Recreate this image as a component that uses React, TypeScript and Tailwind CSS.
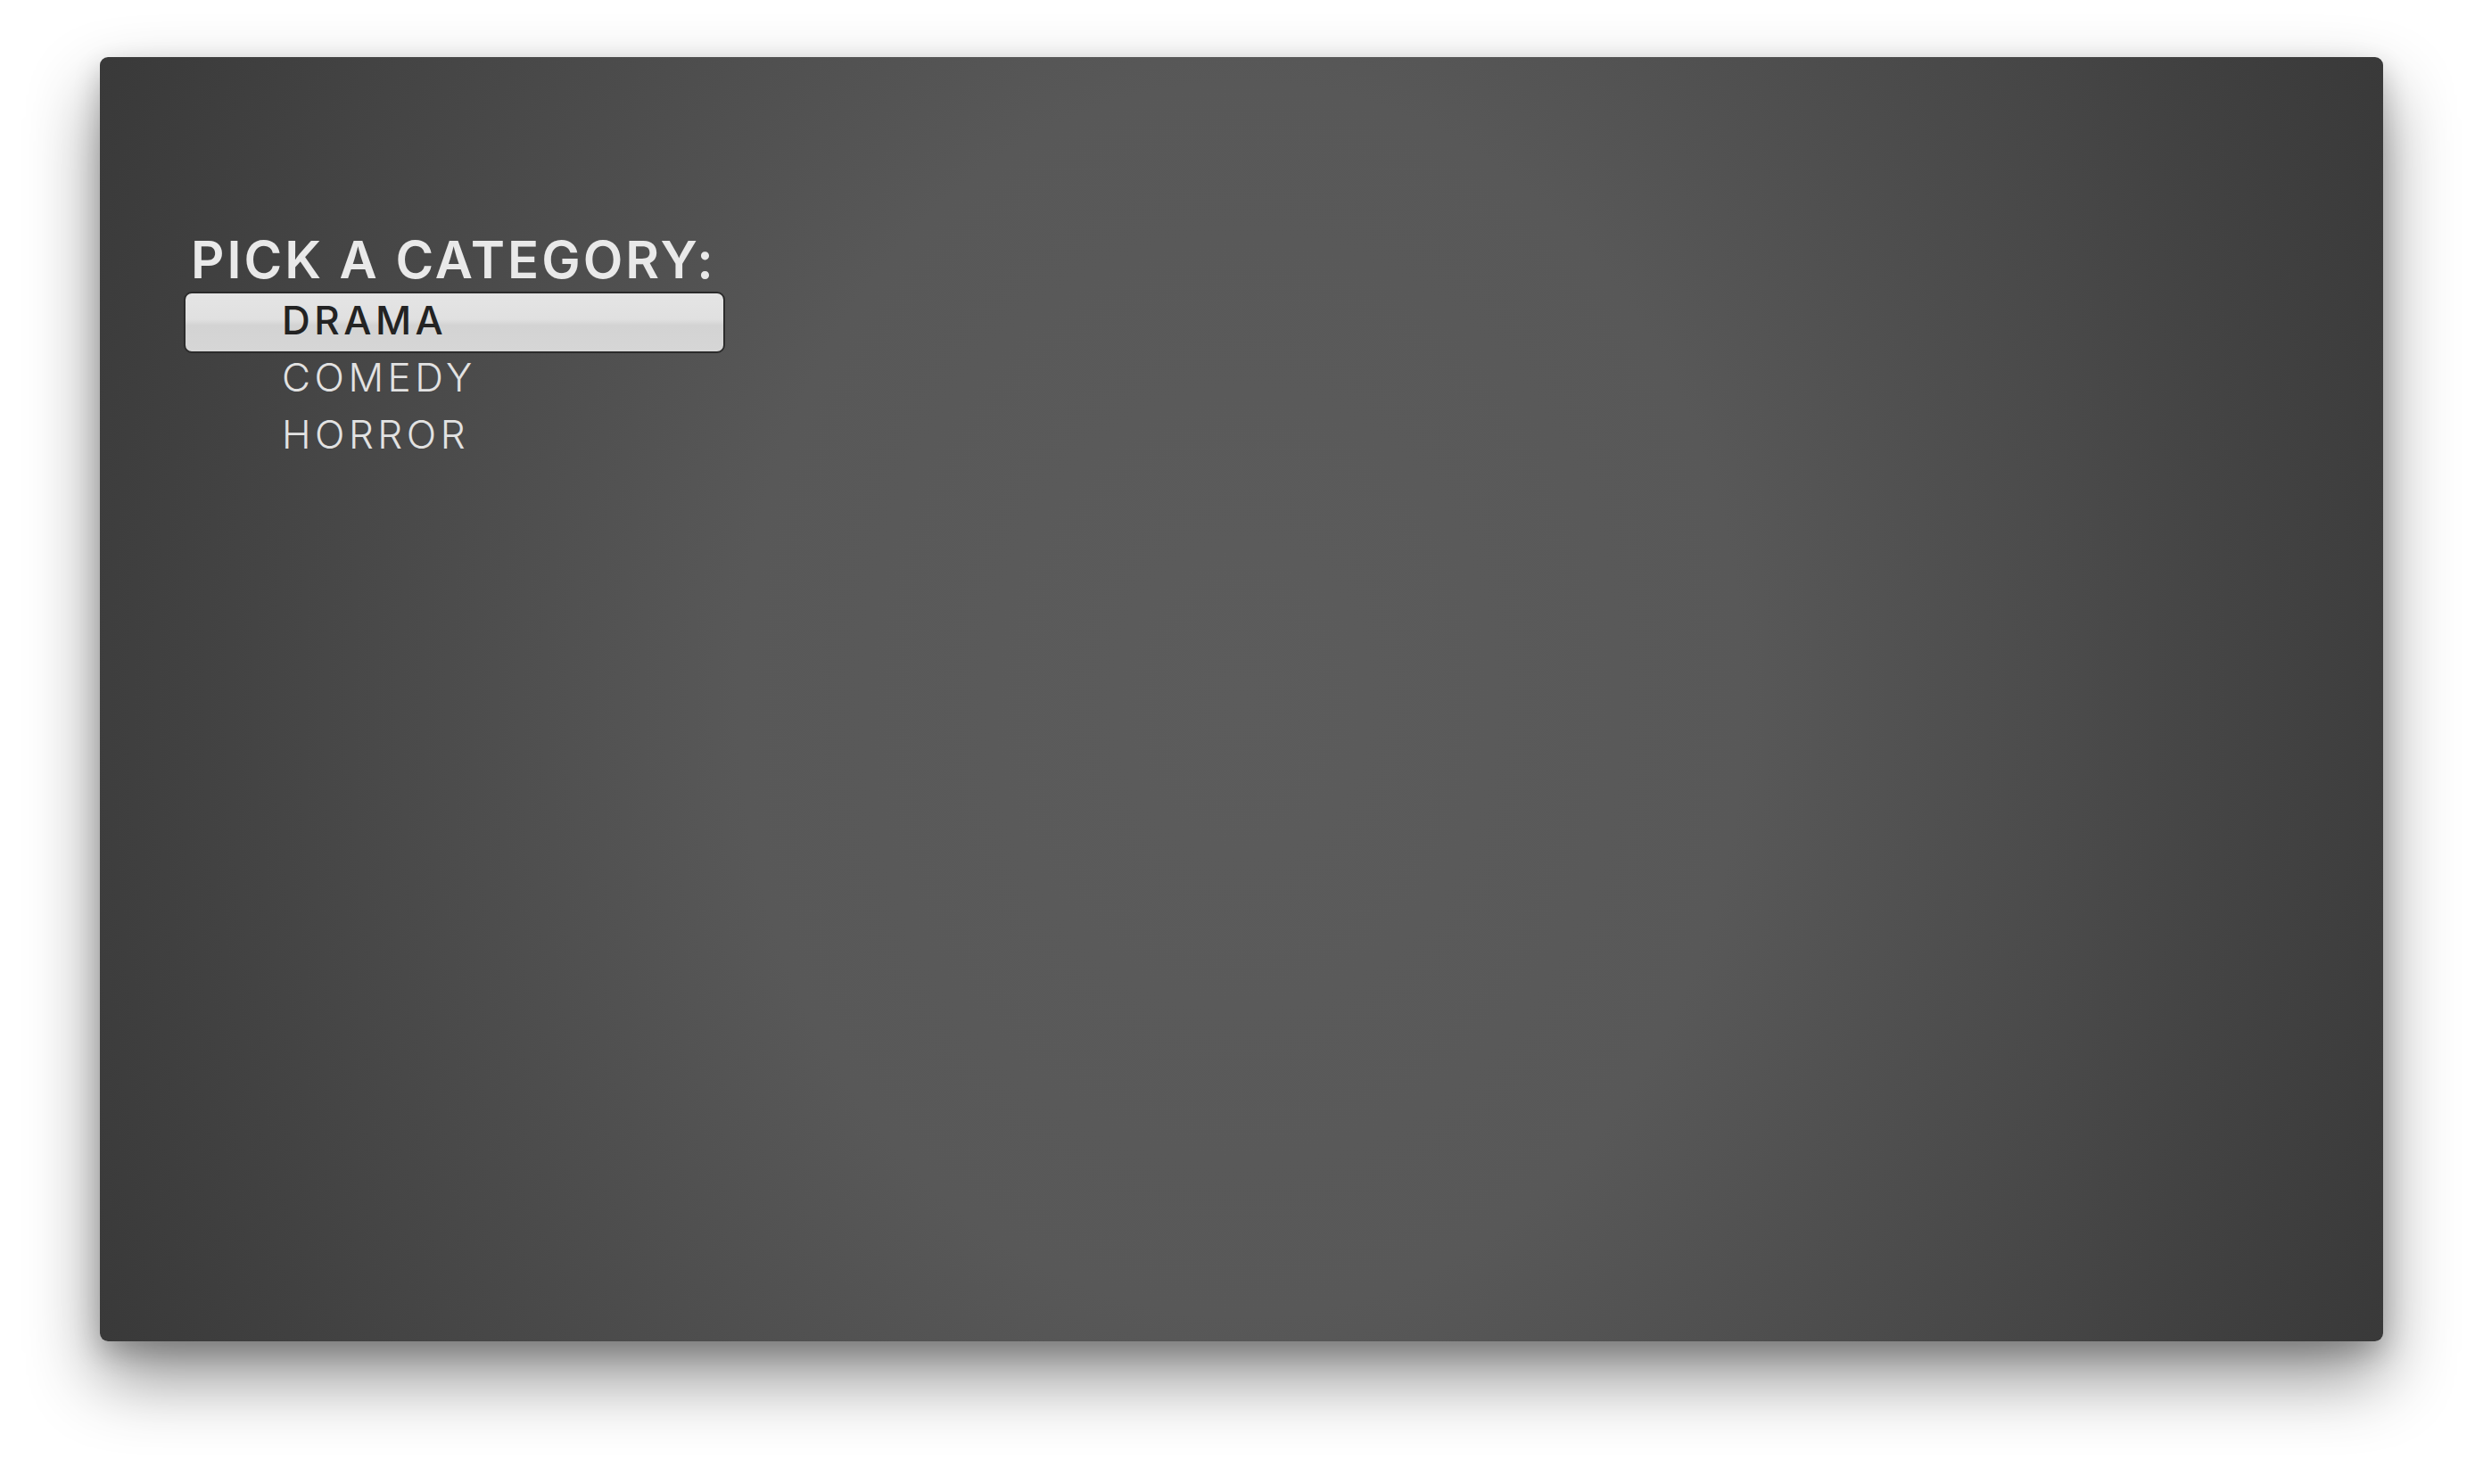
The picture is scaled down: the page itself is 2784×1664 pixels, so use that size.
const categorias = ['DRAMA', 'COMEDY', 'HORROR'];

export default function App() {
  const selecionada = 0;

  return (
    <div className="w-[2784px] h-[1664px] bg-white pt-[64px] pl-[112px] font-['Inter','Liberation_Sans',sans-serif]">
      {/* Tela */}
      <div className="w-[2560px] h-[1440px] rounded-[9px] bg-[radial-gradient(ellipse_55%_120%_at_50%_50%,#5c5c5c_0%,#585858_40%,#393939_100%)] shadow-[0_40px_80px_rgba(0,0,0,0.45),0_12px_30px_rgba(0,0,0,0.2)] pt-[198px] pl-[94px]">
        <h1 className="pl-[8px] text-[58px] leading-[58px] font-semibold text-[#e9e9e9] tracking-[3px]">
          PICK A CATEGORY:
        </h1>

        {/* Lista */}
        <div className="mt-[7px] flex flex-col">
          {categorias.map((c, i) => (
            <div
              key={c}
              className={`w-[607px] h-[69px] flex items-center pl-[108px] pb-[5px] rounded-[9px] border-2 ${
                i === selecionada
                  ? 'bg-[linear-gradient(#e5e5e5_0%,#e0e0e0_45%,#d3d3d3_55%,#d6d6d6_100%)] border-[#2b2b2b] text-[#232323] font-medium'
                  : 'border-transparent text-[#e2e2e2] font-light -mt-[5px]'
              }`}
            >
              <span className="text-[44px] leading-[44px] tracking-[4.5px]">{c}</span>
            </div>
          ))}
        </div>
      </div>
    </div>
  );
}
